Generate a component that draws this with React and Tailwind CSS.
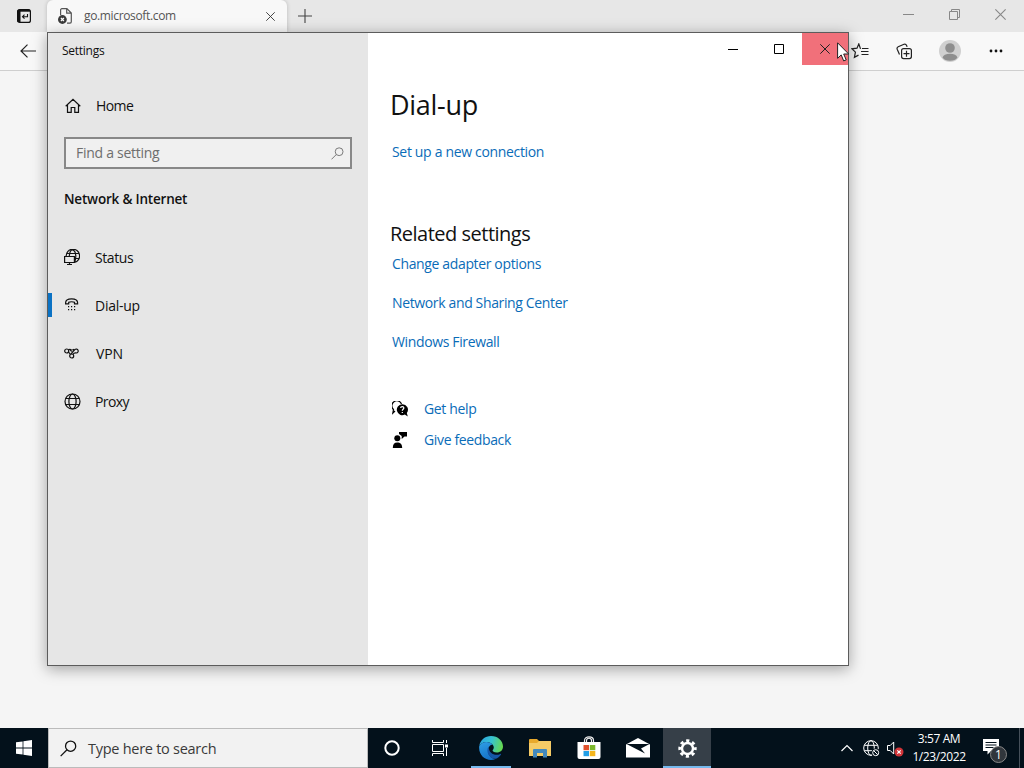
import React from 'react';

const navItems = [
  { label: 'Status', icon: StatusIcon, spacing: 'tracking-[-0.4px]' },
  { label: 'Dial-up', icon: DialIcon, active: true, spacing: 'tracking-[-0.25px]' },
  { label: 'VPN', icon: VpnIcon, spacing: 'pl-px tracking-[-0.1px]' },
  { label: 'Proxy', icon: GlobeIcon, spacing: 'tracking-[-0.6px]' },
];

function StatusIcon() {
  return (
    <svg width="16" height="17" viewBox="0 0 16 17" fill="none" stroke="#111" strokeWidth="1.2">
      <path d="M2.200 7A6.700 6.700 0 1 1 10.500 13.400M3 4.500h11.500M11 9.500h4M5.300 7C5.600 3 6.800.8 8.500.8s3.300 2.700 3.300 6.500-.6 4.600-1.400 5.700" />
      <path d="M.6 7.500h9.800v6H.6zM5.500 13.500v2M3 15.500h5" />
    </svg>
  );
}

function DialIcon() {
  return (
    <svg width="16" height="16" viewBox="0 0 16 16" fill="none" stroke="#111" strokeWidth="1.2">
      <path d="M1.600 5.800c0-2.700 2.600-4 6-4s6 1.300 6 4v1H10.500V5.200C9.500 4.600 5.700 4.600 4.700 5.200v1.600H1.600z" />
      <g fill="#111" stroke="none">
        <path d="M4 9h1.200v1.200H4zM7 9h1.200v1.200H7zM10 9h1.200v1.200H10zM4 12h1.200v1.200H4zM7 12h1.200v1.200H7zM10 12h1.200v1.200H10z" />
      </g>
    </svg>
  );
}

function VpnIcon() {
  return (
    <svg width="16" height="16" viewBox="0 0 16 16" fill="none" stroke="#111" strokeWidth="1.2">
      <circle cx="2.700" cy="6" r="2" />
      <circle cx="7.700" cy="11" r="2" />
      <path d="M4.300 4.800C6 3.500 6.500 5.800 7.700 6.500M4.600 7l1.800 2.500M9 9.500c1-2 1.800-1.700 3.400-1.500a2 2 0 1 0-1.500-3.500C9.500 5.800 8.500 7 7 9.200M6 4.300l1.700.7M8.300 5l1.700-.7" />
    </svg>
  );
}

function GlobeIcon() {
  return (
    <svg width="17" height="17" viewBox="0 0 17 17" fill="none" stroke="#111" strokeWidth="1.2">
      <circle cx="8.500" cy="8.500" r="7.500" />
      <ellipse cx="8.500" cy="8.500" rx="3.600" ry="7.500" />
      <path d="M1.800 5.500h13.400M1.800 11.500h13.400" />
    </svg>
  );
}

function SearchIcon({ size, color }) {
  return (
    <svg width={size} height={size} viewBox="0 0 16 16" fill="none" stroke={color} strokeWidth="1.200">
      <circle cx="10" cy="5.800" r="4.800" />
      <path d="M6.600 9.200.6 15.200" />
    </svg>
  );
}

function CloseIcon({ size, color }) {
  return (
    <svg width={size} height={size} viewBox="0 0 10 10" stroke={color} strokeWidth="1">
      <path d="M.3.3l9.400 9.400M9.700.3.3 9.700" />
    </svg>
  );
}

function EdgeLogo() {
  return (
    <svg width="24" height="24" viewBox="0 0 24 24">
      <defs>
        <linearGradient id="edgeTop" x1="0" y1="0.3" x2="1" y2="0.5">
          <stop offset="0" stopColor="#2aa4e2" />
          <stop offset="0.5" stopColor="#37c3d0" />
          <stop offset="1" stopColor="#66d94f" />
        </linearGradient>
        <linearGradient id="edgeLeft" x1="0" y1="0" x2="0.4" y2="1">
          <stop offset="0" stopColor="#2f9fe6" />
          <stop offset="1" stopColor="#1673c8" />
        </linearGradient>
      </defs>
      <path d="M.3 10C1.200 4 6 0 12 0c7 0 12 5 12 10.400 0 3.700-2.700 6-6.200 6-3 0-4.200-1-4.200-1.800 0-.8 1.200-1.200 1.200-3C14.800 8.500 11.500 6 7.500 6 4 6 1.500 7.800.3 10z" fill="url(#edgeTop)" />
      <path d="M.2 10.300C1.500 7.600 4.200 6 7.500 6c2.700 0 4.700 1 6 2.500-2 .2-4.500 2.500-4.500 6.300 0 4.500 3.500 8.200 7.500 8.200-1.300.6-2.900 1-4.500 1C5.300 24-.6 18.500.2 10.300z" fill="url(#edgeLeft)" />
      <path d="M9.700 10.800c-3.500 4 .5 12.700 7.300 12 2-.8 4-2.500 5-4.300.3-.6-.2-.8-.7-.5-4.800 2.300-11.500.1-11.600-7.200z" fill="#1556a6" />
    </svg>
  );
}

function BrowserWindow() {
  return (
    <div className="flex h-[728px] flex-col bg-[#f5f5f5]">
      <div className="flex h-8 items-stretch bg-[#e7e7e7]">
        <div className="flex w-[47px] items-center justify-center">
          <svg width="14" height="14" viewBox="0 0 14 14" fill="none" stroke="#111" strokeWidth="1.200">
            <rect x=".6" y=".6" width="12.800" height="12.800" rx="2" />
            <path d="M1 1.700h12" strokeWidth="2" />
            <path d="M2 1v12" strokeWidth="3" />
            <path d="M10.500 5v2.700H5.500M7.500 5.700l-2 2 2 2" strokeWidth="1.100" />
          </svg>
        </div>
        <div className="flex w-60 items-center rounded-t-md bg-[#f8f8f8] pl-[11px] shadow-[0_0_4px_rgba(0,0,0,0.2)]">
          <svg width="14" height="16" viewBox="0 0 14 16" fill="none" stroke="#555" strokeWidth="1.200">
            <path d="M2.600 7V2a1.300 1.300 0 0 1 1.300-1.300h5l4.400 4.400v8.700a1.300 1.300 0 0 1-1.300 1.300H9M8.700.7v4.500h4.600" />
            <circle cx="4.400" cy="11.500" r="4.400" fill="#3c3c3c" stroke="none" />
            <path d="M2.900 10l3 3M5.900 10l-3 3" stroke="#fff" />
          </svg>
          <span className="ml-3 w-[182px] text-[12px] tracking-[-0.35px] text-[#555]">go.microsoft.com</span>
          <CloseIcon size={9} color="#333" />
        </div>
        <div className="flex flex-1 items-center pl-[11px]">
          <svg width="14" height="14" viewBox="0 0 14 14" stroke="#444" strokeWidth="1.100">
            <path d="M7 0v14M0 7h14" />
          </svg>
        </div>
        <div className="flex items-center gap-[35px] pb-1 pr-[18px]">
          <svg width="11" height="11" viewBox="0 0 11 11" stroke="#888">
            <path d="M0 5.500h11" />
          </svg>
          <svg width="11" height="11" viewBox="0 0 11 11" fill="none" stroke="#888">
            <path d="M.5 2.500h8v8h-8zM2.500 2.500v-2h8v8h-2" />
          </svg>
          <CloseIcon size={11} color="#888" />
        </div>
      </div>
      <div className="flex h-[39px] items-center border-b border-[#cfcfcf] bg-[#f8f8f8] pl-5 pr-[21px]">
        <svg width="16" height="14" viewBox="0 0 16 14" fill="none" stroke="#222" strokeWidth="1.200">
          <path d="M16 7H1M7.500.6 1 7l6.500 6.400" />
        </svg>
        <div className="flex-1" />
        <svg className="mr-[27px]" width="18" height="16" viewBox="0 0 18 16" fill="none" stroke="#222" strokeWidth="1.200">
          <path d="M10 5.500 9.300 5.200 7.800.9 6 5.200.9 5.800l3.500 3.300-1 5.200 4.100-2.200M11 5.500h6.500M10 8.500h7.500M10.500 11.500h7" />
        </svg>
        <svg className="mr-[27px]" width="16" height="17" viewBox="0 0 16 17" fill="none" stroke="#222" strokeWidth="1.200">
          <path d="M3.500 11.500 1.200 6.300a2 2 0 0 1 1-2.500L8 1.300a2 2 0 0 1 2.500 1l.6 1.600" />
          <rect x="5.600" y="5.600" width="9.800" height="10" rx="2" fill="#f8f8f8" />
          <path d="M10.500 7.700v6M7.500 10.700h6" />
        </svg>
        <svg className="mr-7" width="22" height="22" viewBox="0 0 22 22">
          <circle cx="11" cy="11" r="11" fill="#d0d0d0" />
          <circle cx="11" cy="8" r="4.800" fill="#8e8e8e" />
          <ellipse cx="11" cy="17.300" rx="7.200" ry="3.500" fill="#8e8e8e" />
        </svg>
        <svg width="14" height="4" viewBox="0 0 14 4" fill="#111">
          <circle cx="2" cy="2" r="1.400" />
          <circle cx="7" cy="2" r="1.400" />
          <circle cx="12" cy="2" r="1.400" />
        </svg>
      </div>
    </div>
  );
}

function Sidebar() {
  return (
    <div className="flex w-80 flex-col bg-[#e6e6e6]">
      <div className="flex h-8 items-center pl-3.5 pt-[3px] text-[12px] tracking-[-0.27px]">Settings</div>
      <div className="mt-[25px] flex h-8 items-center pl-[17px]">
        <svg width="16" height="16" viewBox="0 0 16 16" fill="none" stroke="#111" strokeWidth="1.200">
          <path d="M.7 8.300 8 1.300l7.300 7M2.500 7v7.400h3.700V9.500h3.600v4.900h3.700V7" />
        </svg>
        <span className="ml-[15px] pb-0.5 text-[14px] tracking-[-0.6px]">Home</span>
      </div>
      <div className="mx-4 mt-[15px] flex h-8 items-center justify-between border-2 border-[#888] bg-[#f0f0f0] pl-2.5 pr-1.5">
        <span className="pb-0.5 text-[14px] tracking-[-0.28px] text-[#6e6e6e]">Find a setting</span>
        <SearchIcon size={13} color="#777" />
      </div>
      <div className="mt-5 pl-4 text-[13.500px] font-semibold leading-5 tracking-[-0.2px]">Network &amp; Internet</div>
      <div className="mt-[25px] flex flex-col text-[14px]">
        {navItems.map((item) => (
          <div key={item.label} className="flex h-12 items-center pb-0.5">
            <div className={item.active ? 'h-6 w-1 bg-[#0b72c4]' : 'h-6 w-1'} />
            <div className="ml-[11px] flex w-[18px] justify-center">
              <item.icon />
            </div>
            <span className={`ml-3.5 ${item.spacing}`}>{item.label}</span>
          </div>
        ))}
      </div>
    </div>
  );
}

function SettingsWindow() {
  return (
    <div className="absolute left-[47px] top-8 flex h-[634px] w-[802px] border border-[#5c5c5c] bg-white shadow-[0_3px_14px_rgba(0,0,0,0.35)]">
      <Sidebar />
      <div className="flex flex-1 flex-col">
        <div className="flex h-8 justify-end">
          <div className="flex w-[46px] items-center justify-center">
            <svg width="10" height="11" viewBox="0 0 10 11" stroke="#000"><path d="M0 5.500h10" /></svg>
          </div>
          <div className="flex w-[46px] items-center justify-center">
            <svg width="10" height="10" viewBox="0 0 10 10" fill="none" stroke="#000"><path d="M.5.500h9v9h-9z" /></svg>
          </div>
          <div className="flex w-[46px] items-center justify-center bg-[#f1707a]">
            <CloseIcon size={10} color="#222" />
          </div>
        </div>
        <div className="flex flex-col items-start pl-6 pt-5 text-[14px] tracking-[-0.36px] text-[#0a6cb8]">
          <h1 className="-ml-0.5 text-[27px] leading-10 tracking-[-0.3px] text-[#111]">Dial-up</h1>
          <span className="mt-[17px] leading-5 tracking-[-0.33px]">Set up a new connection</span>
          <h2 className="-ml-0.5 mt-[58px] text-[20px] leading-7 tracking-[-0.5px] text-[#111]">Related settings</h2>
          <span className="mt-1.5 leading-5">Change adapter options</span>
          <span className="mt-[19px] leading-5">Network and Sharing Center</span>
          <span className="mt-[19px] leading-5">Windows Firewall</span>
          <div className="mt-[47px] flex h-5 items-center gap-4">
            <svg width="16" height="16" viewBox="0 0 16 16">
              <path d="M3 10 .8 12.200 1.500 8.500A5 5 0 1 1 9.500 3" fill="none" stroke="#000" strokeWidth="1.200" />
              <path d="M10 3.200a5.500 5.500 0 1 0 2.800 10.400l3 1.900-1-3.500A5.500 5.500 0 0 0 10 3.200z" fill="#000" />
              <path d="M8.600 7c.2-2 3.400-1.800 3.200.1-.1 1.200-1.500 1.200-1.500 2.600M10.300 10.900v1.200" fill="none" stroke="#fff" strokeWidth="1.200" />
            </svg>
            <span className="pb-0.5">Get help</span>
          </div>
          <div className="mt-[11px] flex h-5 items-center gap-4">
            <svg width="16" height="16" viewBox="0 0 16 16" fill="#000">
              <circle cx="5.300" cy="6.300" r="3" />
              <path d="M.8 16c0-3.800 1.500-5.500 4.500-5.500s4.900 1.700 4.900 5.500zM7 0h8v4.500h-2.500L9.700 7V4L7 2z" />
            </svg>
            <span className="pb-0.5">Give feedback</span>
          </div>
        </div>
      </div>
    </div>
  );
}

function Taskbar() {
  return (
    <div className="flex h-10 bg-[#03111b] text-white">
      <div className="flex w-12 items-center justify-center">
        <svg width="16" height="16" viewBox="0 0 16 16" fill="#fff">
          <path d="M0 2.300 6.600 1.400v6.100H0zM7.400 1.300 16 0v7.500H7.400zM0 8.400h6.600v6.200L0 13.700zM7.400 8.400H16V16l-8.600-1.300z" />
        </svg>
      </div>
      <div className="flex w-80 items-center border border-[#bbb] bg-[#f2f2f2] pl-[11px] text-[#3a3a3a]">
        <SearchIcon size={17} color="#111" />
        <span className="ml-[11px] pt-0.5 text-[14.500px] tracking-[-0.27px]">Type here to search</span>
      </div>
      <div className="flex w-12 items-center justify-center">
        <svg width="16" height="16" viewBox="0 0 16 16" fill="none" stroke="#fff" strokeWidth="2">
          <circle cx="8" cy="8" r="6.700" />
        </svg>
      </div>
      <div className="flex w-12 items-center justify-center">
        <svg width="17" height="16" viewBox="0 0 17 16" fill="none" stroke="#fff">
          <path d="M.5 0v2.500h11V0M.5 16v-2.500h11V16M.5 4.500h11v7H.5zM14.500 0v3M14.500 8v8" />
          <path d="M13 4.500h3v3h-3z" fill="#fff" stroke="none" />
        </svg>
      </div>
      <div className="flex w-[54px] flex-col items-center">
        <div className="flex h-[38px] items-center pt-0.5"><EdgeLogo /></div>
        <div className="h-0.5 w-10 bg-[#76b9ed]" />
      </div>
      <div className="flex w-11 items-center justify-center">
        <svg width="22" height="19" viewBox="0 0 22 19">
          <path d="M0 1a1 1 0 0 1 1-1h7l2 2h11a1 1 0 0 1 1 1v14H0z" fill="#e8a92c" />
          <path d="M0 4h8l2-2h12v15H0z" fill="#f5cb66" />
          <path d="M4 18.500V11a1 1 0 0 1 1-1h12a1 1 0 0 1 1 1v7.500h-4V14H8v4.500z" fill="#4389bd" />
        </svg>
      </div>
      <div className="flex w-[53px] items-center justify-center">
        <svg width="24" height="24" viewBox="0 0 24 24">
          <path d="M7.500 7V4.500C7.500-.3 16.500-.3 16.500 4.500V7M9.500 6V4.500C9.500 1.500 14.500 1.500 14.500 4.500V6" fill="none" stroke="#eee" strokeWidth="1.200" />
          <path d="M.5 6h23v15a2 2 0 0 1-2 2h-19a2 2 0 0 1-2-2z" fill="#fff" />
          <path d="M6.500 9H12v5.200H6.500z" fill="#e0502c" />
          <path d="M12.800 9h5.500v5.200h-5.500z" fill="#7db82c" />
          <path d="M6.500 15H12v5.200H6.500z" fill="#229ee6" />
          <path d="M12.800 15h5.500v5.200h-5.500z" fill="#f6b61c" />
        </svg>
      </div>
      <div className="flex w-12 items-center pl-[11px]">
        <svg width="24" height="20" viewBox="0 0 24 20">
          <path d="M0 6.500 12 0l12 6.500V19.500H0z" fill="#fff" />
          <path d="M.5 6h23L15 10.500l4 5z" fill="#03111b" />
        </svg>
      </div>
      <div className="flex w-12 flex-col items-center bg-[#363f48]">
        <div className="flex h-[38px] items-center pt-0.5">
          <svg width="19" height="19" viewBox="0 0 18 18" fill="none" stroke="#fff">
            <circle cx="9" cy="9" r="5.200" strokeWidth="2.300" />
            <circle cx="9" cy="9" r="7.300" strokeWidth="2.800" strokeDasharray="3 2.733" strokeDashoffset="1.500" />
          </svg>
        </div>
        <div className="h-0.5 w-12 bg-[#76b9ed]" />
      </div>
      <div className="flex flex-1 items-center justify-end">
        <svg width="12" height="8" viewBox="0 0 12 8" fill="none" stroke="#fff" strokeWidth="1.200">
          <path d="M.5 7 6 1.500 11.500 7" />
        </svg>
        <svg className="ml-2.5" width="17" height="17" viewBox="0 0 17 17" fill="none" stroke="#fff">
          <circle cx="8" cy="8" r="7.300" />
          <ellipse cx="8" cy="8" rx="3.300" ry="7.300" />
          <path d="M1.300 5.300h13.400M1.300 10.700h13.400" />
          <circle cx="12.700" cy="12.700" r="4" fill="#03111b" stroke="#03111b" />
          <circle cx="12.700" cy="12.700" r="3" />
          <path d="M10.600 10.600l4.200 4.200" />
        </svg>
        <svg className="ml-[7px]" width="17" height="17" viewBox="0 0 17 17" fill="none" stroke="#fff">
          <path d="M.5 5.500h2.700l3.500-3.500v12l-3.500-3.500H.5z" />
          <circle cx="12" cy="12" r="4.500" fill="#d13438" stroke="none" />
          <path d="M10.300 10.300l3.400 3.400M13.700 10.300l-3.400 3.400" strokeWidth="1.200" />
        </svg>
      </div>
      <div className="flex w-[70px] flex-col items-center justify-center pb-px text-[12px] leading-[18px] tracking-[-0.4px]">
        <span>3:57 AM</span>
        <span className="whitespace-nowrap">1/23/2022</span>
      </div>
      <div className="flex w-[46px] items-center border-r border-[#46505a] pl-2 pt-1.5">
        <svg width="25" height="26" viewBox="0 0 25 26">
          <path d="M1 1h16v12H9l-3.500 3.500V13H1z" fill="#fff" />
          <path d="M3.500 4.500h11M3.500 7h11M3.500 9.500h8" stroke="#03111b" />
          <circle cx="16.500" cy="16.500" r="8" fill="#30363c" stroke="#888" />
          <text x="16.500" y="21" textAnchor="middle" fontSize="12" fill="#fff">1</text>
        </svg>
      </div>
      <div className="w-1" />
    </div>
  );
}

export default function App() {
  return (
    <div className="relative h-[768px] w-[1024px] overflow-hidden text-[#111] [font-family:'Open_Sans','Noto_Sans',sans-serif]">
      <BrowserWindow />
      <SettingsWindow />
      <Taskbar />
      <svg className="absolute left-[837px] top-[42px]" width="13" height="20" viewBox="0 0 13 20">
        <path d="M.6.800v15.500l3.600-3.400 2.500 6 2.500-1-2.500-5.900h5z" fill="#fff" stroke="#222" />
      </svg>
    </div>
  );
}
